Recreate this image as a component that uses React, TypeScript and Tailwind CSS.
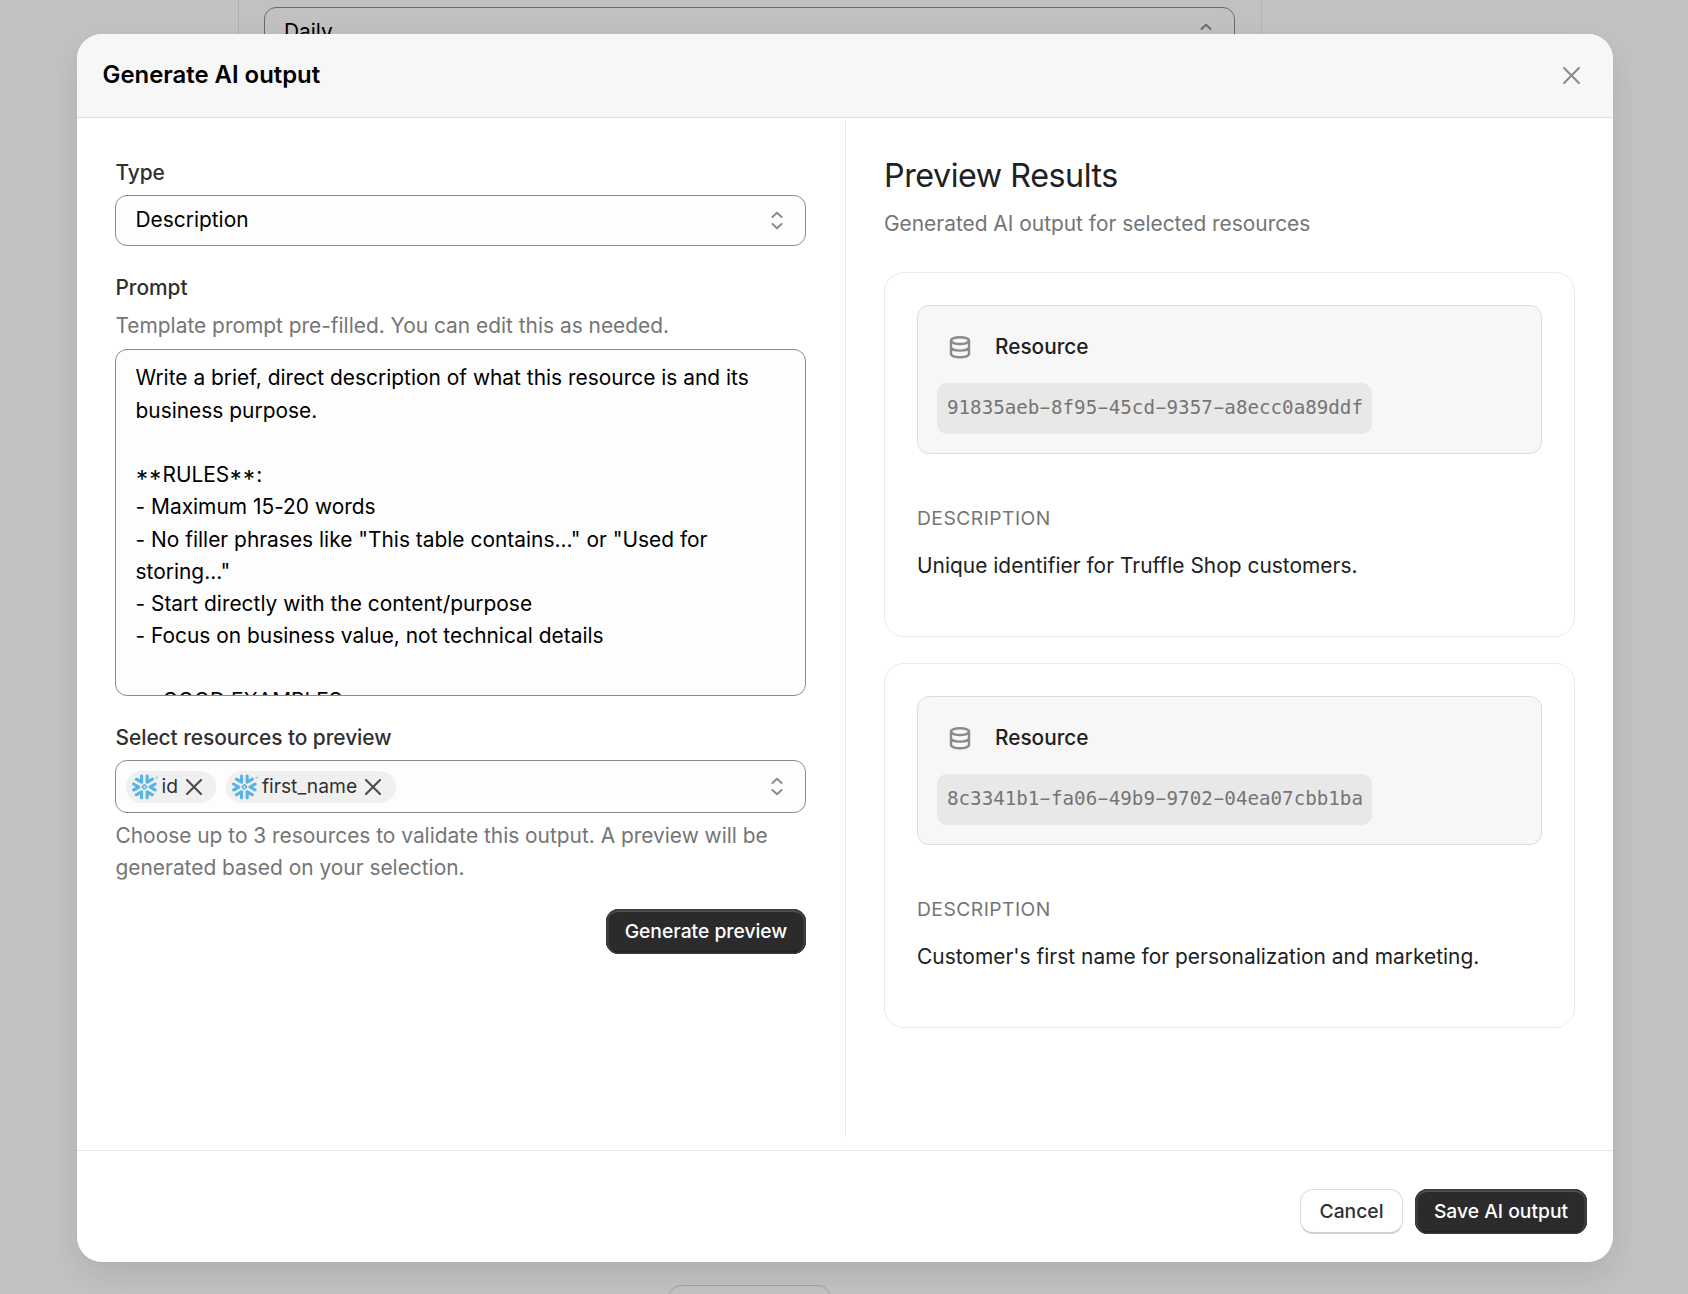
import React from "react";
import { SiSnowflake } from "react-icons/si";

const PROMPT = `Write a brief, direct description of what this resource is and its business purpose.

**RULES**:
- Maximum 15-20 words
- No filler phrases like "This table contains..." or "Used for storing..."
- Start directly with the content/purpose
- Focus on business value, not technical details

**GOOD EXAMPLES**:`;

const RESULTS = [
  { id: "91835aeb-8f95-45cd-9357-a8ecc0a89ddf", text: "Unique identifier for Truffle Shop customers." },
  { id: "8c3341b1-fa06-49b9-9702-04ea07cbb1ba", text: "Customer's first name for personalization and marketing." },
];

function Cross({ className, size, width }: { className: string; size: number; width: number }) {
  return (
    <svg className={className} width={size} height={size} viewBox="0 0 16 16" fill="none" stroke="currentColor" strokeWidth={width} strokeLinecap="round">
      <path d="M1 1 15 15M15 1 1 15" />
    </svg>
  );
}

function UpDown({ className }: { className: string }) {
  return (
    <svg className={`shrink-0 ${className}`} width="12" height="19" viewBox="0 0 12 19" fill="none" stroke="currentColor" strokeWidth="1.9" strokeLinecap="round" strokeLinejoin="round">
      <path d="M1.4 6 6 1.7 10.6 6M1.4 13 6 17.3 10.6 13" />
    </svg>
  );
}

function Database() {
  return (
    <svg className="mt-px text-[#8a8a8a]" width="22" height="23" viewBox="0 0 22 23" fill="none" stroke="currentColor" strokeWidth="2.4">
      <ellipse cx="11" cy="4.6" rx="9" ry="3.4" />
      <path d="M2 4.6v13.2c0 2 4 3.5 9 3.5s9-1.5 9-3.5V4.6M2 11.3c0 1.9 4 3.3 9 3.3s9-1.4 9-3.3" />
    </svg>
  );
}

/* Wide, vertically centred asterisks for the markdown markers. */
function PromptText() {
  return (
    <>
      {PROMPT.split(/(\*+)/).map((part, i) =>
        part.startsWith("*") ? (
          <span key={i} className="relative top-[5.5px] pl-[0.5px] text-[24px] leading-none tracking-[1.2px]">
            {part}
          </span>
        ) : (
          part
        ),
      )}
    </>
  );
}

function Uuid({ value }: { value: string }) {
  return (
    <>
      {value.split(/(-)/).map((part, i) =>
        part === "-" ? (
          <span key={i} className="inline-block scale-x-[1.8]">
            -
          </span>
        ) : (
          part
        ),
      )}
    </>
  );
}

function Label({ children }: { children: React.ReactNode }) {
  return <div className="pl-[0.5px] font-medium leading-8 tracking-[-0.05px] text-[#303030]">{children}</div>;
}

function Chip({ label }: { label: string }) {
  return (
    <span className="flex h-8 items-center rounded-full bg-[#f0f0f0] pl-[5.5px] pr-[14.4px]">
      <SiSnowflake size={26} className="text-[#56b3e8]" />
      <span className="-mt-px ml-[4px] text-[19.3px] leading-8 text-[#303030]">{label}</span>
      <Cross className="ml-[8px] text-[#4a4a4a]" size={16} width={2.1} />
    </span>
  );
}

function DarkButton({ children, className }: { children: React.ReactNode; className: string }) {
  return (
    <button
      className={`h-[45px] rounded-[13px] bg-[#2b2b2b] text-[19.3px] font-medium leading-[45px] text-white shadow-[inset_0_0_0_1.5px_#3a3a3a,inset_0_3px_0_#505050,inset_2.5px_0_0_#444444,inset_-2.5px_0_0_#444444,inset_0_-2.5px_0_#1c1c1c] ${className}`}
    >
      {children}
    </button>
  );
}

function Result({ id, text }: { id: string; text: string }) {
  return (
    <article className="h-[365px] rounded-[20px] border border-[#ebebeb] px-8 pt-8">
      <div className="h-[149px] rounded-[12px] border border-[#dcdcdc] bg-[#f7f7f7] pl-[19px] pt-[25px]">
        <div className="flex h-8 items-center pl-[12px]">
          <Database />
          <span className="ml-[24px] text-[20.8px] font-medium leading-8 text-[#1f2021]">Resource</span>
        </div>
        <div className="mt-[20px] flex">
          <code className="h-[51px] rounded-[10px] bg-[#e8e8e8] pl-[10px] pr-[9px] font-['DejaVu_Sans_Mono',monospace] text-[19.2px] leading-[49px] text-[#757575]">
            <Uuid value={id} />
          </code>
        </div>
      </div>
      <p className="mt-[48px] text-[19.3px] leading-8 tracking-[0.46px] text-[#757575]">DESCRIPTION</p>
      <p className="mt-[16px] text-[20.9px] leading-8 tracking-[0.02px] text-[#202122]">{text}</p>
    </article>
  );
}

export default function App() {
  return (
    <div className="relative h-[1294px] w-[1688px] overflow-hidden bg-[#c2c2c2] font-[Inter,sans-serif] text-[#303030]">
      <div className="ml-[238px] h-[1287px] w-[1024px]">
        <div className="h-[1100px] border-x border-[#b2b2b2] bg-[#c1c1c1] pl-[25px] pt-[7px]">
          <div className="flex h-[52px] w-[971px] items-center justify-between rounded-[12px] border border-[#6b6b6b] pl-[19px] pr-[22px] text-[20.9px] text-black">
            <span className="-mt-[2px]">Daily</span>
            <UpDown className="-mt-[2px] text-[#6a6a6a]" />
          </div>
        </div>
        <div className="ml-[430px] mt-[185px] h-[45px] w-[163px] rounded-[13px] border-[1.5px] border-[#a3a3a3]" />
      </div>

      <section
        role="dialog"
        aria-label="Generate AI output"
        className="absolute left-[77px] top-[34px] flex h-[1228px] w-[1536px] flex-col overflow-hidden rounded-[25px] bg-white shadow-[0_13px_32px_-3px_rgba(26,26,26,0.12)]"
      >
        <header className="flex h-[84px] shrink-0 items-center justify-between border-b border-[#dedede] bg-[#f7f7f7] pl-[25.5px] pr-[33px]">
          <h2 className="pb-[2px] text-[23.9px] font-semibold leading-8 text-black">Generate AI output</h2>
          <Cross className="text-[#8a8a8a]" size={17} width={1.9} />
        </header>

        <div className="flex h-[1019px] shrink-0">
          <div className="w-[769px] shrink-0 border-r border-[#ebebeb] px-[38px] pt-[39px] text-[20.9px]">
            <Label>Type</Label>
            <div className="mt-[6px] flex h-[51px] w-[691px] items-center justify-between rounded-[12px] border border-[#8a8a8a] bg-[#fdfdfd] pl-[19.5px] pr-[22px] text-black">
              <span className="-mt-[1px] leading-8">Description</span>
              <UpDown className="text-[#8a8a8a]" />
            </div>

            <div className="h-[26px]" />
            <Label>Prompt</Label>
            <div className="mt-[6px] pl-[0.5px] leading-8 text-[#757575]">Template prompt pre-filled. You can edit this as needed.</div>
            <div className="mt-[7px] h-[347px] w-[691px] overflow-hidden whitespace-pre-wrap rounded-[12px] border border-[#8a8a8a] bg-[#fdfdfd] pl-[19.5px] pr-5 pt-[12.4px] leading-[32.25px] tracking-[0.01px] text-black">
              <PromptText />
            </div>

            <div className="h-[26px]" />
            <Label>Select resources to preview</Label>
            <div className="mt-[6px] flex h-[53px] w-[691px] items-center justify-between rounded-[12px] border border-[#8a8a8a] bg-[#fdfdfd] pl-[10px] pr-[22px]">
              <div className="flex gap-[10px]">
                <Chip label="id" />
                <Chip label="first_name" />
              </div>
              <UpDown className="text-[#8a8a8a]" />
            </div>
            <p className="mt-[7px] w-[692px] pl-[0.5px] leading-[32.25px] text-[#757575]">
              Choose up to 3 resources to validate this output. A preview will be generated based on your selection.
            </p>
            <div className="mt-[24px] flex w-[691px] justify-end">
              <DarkButton className="w-[200px]">Generate preview</DarkButton>
            </div>
          </div>

          <div className="flex-1 pl-[38px] pt-[38px]">
            <h3 className="text-[32.25px] leading-[40px] tracking-[-0.46px] text-[#202122]">Preview Results</h3>
            <p className="mt-[12px] text-[20.9px] leading-8 text-[#757575]">Generated AI output for selected resources</p>
            <div className="mt-[32px] flex w-[691px] flex-col gap-[26px]">
              {RESULTS.map((r) => (
                <Result key={r.id} {...r} />
              ))}
            </div>
          </div>
        </div>

        <footer className="mt-[13px] flex flex-1 justify-end gap-[12px] border-t border-[#e6e6e6] pr-[26px] pt-[38px]">
          <button className="h-[45px] w-[103px] rounded-[13px] border-[1.5px] border-b-2 border-[#dcdcdc] border-b-[#cfcfcf] bg-white text-[19.3px] font-medium text-[#303030]">
            Cancel
          </button>
          <DarkButton className="w-[172px]">Save AI output</DarkButton>
        </footer>
      </section>
    </div>
  );
}
